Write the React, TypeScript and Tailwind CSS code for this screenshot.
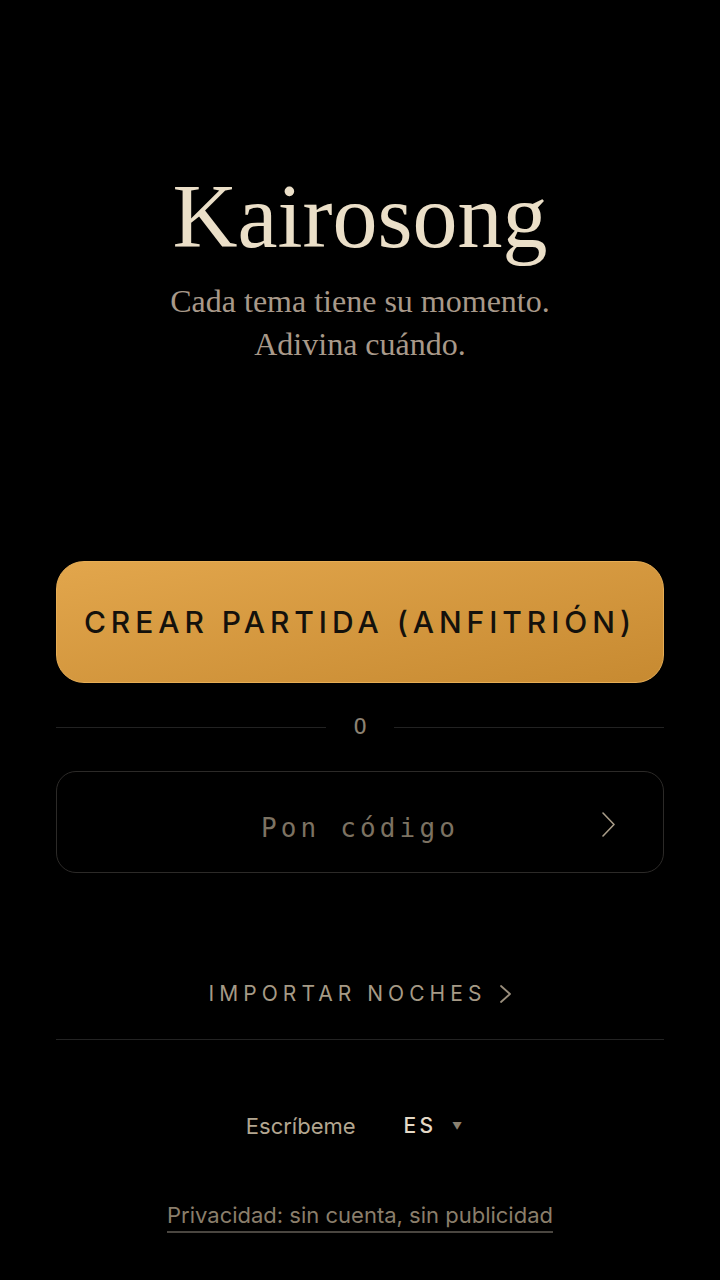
function Chevron({ w, h, stroke, className }: { w: number; h: number; stroke: number; className?: string }) {
  return (
    <svg width={w + 2} height={h + 2} viewBox={`-1 -1 ${w + 2} ${h + 2}`} fill="none" className={className}>
      <path d={`M0 0 L${w} ${h / 2} L0 ${h}`} stroke="currentColor" strokeWidth={stroke} strokeLinecap="round" strokeLinejoin="round" />
    </svg>
  );
}

function App() {
  return (
    <div className="min-h-[1280px] w-full bg-black px-14 flex flex-col items-stretch font-['Inter',sans-serif]">
      <header className="pt-[172px] flex flex-col items-center">
        <h1 className="text-[90px] leading-none text-[#ebdfc8] font-['Liberation_Serif',serif]">Kairosong</h1>
        <p className="mt-[18px] text-center text-[32px] leading-[43px] text-[#a8998a] font-['Liberation_Serif',serif]">
          Cada tema tiene su momento.
          <br />
          Adivina cuándo.
        </p>
      </header>

      <button className="mt-[195px] h-[122px] rounded-[28px] border border-[#e6ad55] bg-gradient-to-br from-[#e2a64c] to-[#c78a31] text-[30px] font-medium tracking-[0.165em] text-[#14110c]">
        CREAR PARTIDA (ANFITRIÓN)
      </button>

      <div className="mt-[34px] flex items-center h-[20px]">
        <div className="flex-1 h-px bg-[#222]" />
        <span className="w-[68px] text-center text-[22px] leading-[20px] text-[#8c8272] font-['DejaVu_Sans_Mono',monospace]">O</span>
        <div className="flex-1 h-px bg-[#222]" />
      </div>

      <div className="mt-[34px] h-[102px] rounded-[20px] border border-[#2c2a28] relative flex items-center justify-center">
        <span className="text-[26px] tracking-[0.16em] text-[#7c7262] font-['DejaVu_Sans_Mono',monospace] pt-3">Pon código</span>
        <Chevron w={11} h={23} stroke={1.6} className="absolute right-[48px] top-[40px] text-[#a89c88]" />
      </div>

      <div className="mt-[107px] flex items-center justify-center gap-[14px] h-[28px] text-[21px] tracking-[0.24em] text-[#a69a86]">
        <span>IMPORTAR NOCHES</span>
        <Chevron w={9} h={16} stroke={1.8} className="text-[#9a8e7c]" />
      </div>

      <div className="mt-[31px] h-px bg-[#232323]" />

      <div className="mt-[72px] flex items-center justify-center h-[28px] pr-[12px]">
        <span className="text-[22px] text-[#b3a690]">Escríbeme</span>
        <span className="ml-[48px] text-[21px] font-medium tracking-[0.15em] text-[#e4d9c6]">ES</span>
        <span className="ml-[16px] text-[10px] text-[#8a8070]">▼</span>
      </div>

      <div className="mt-[60px] flex justify-center">
        <span className="text-[22px] leading-[30px] text-[#8a7e6b] border-b-2 border-[#4a4640] pb-[1px]">
          Privacidad: sin cuenta, sin publicidad
        </span>
      </div>
    </div>
  );
}

export default App;
